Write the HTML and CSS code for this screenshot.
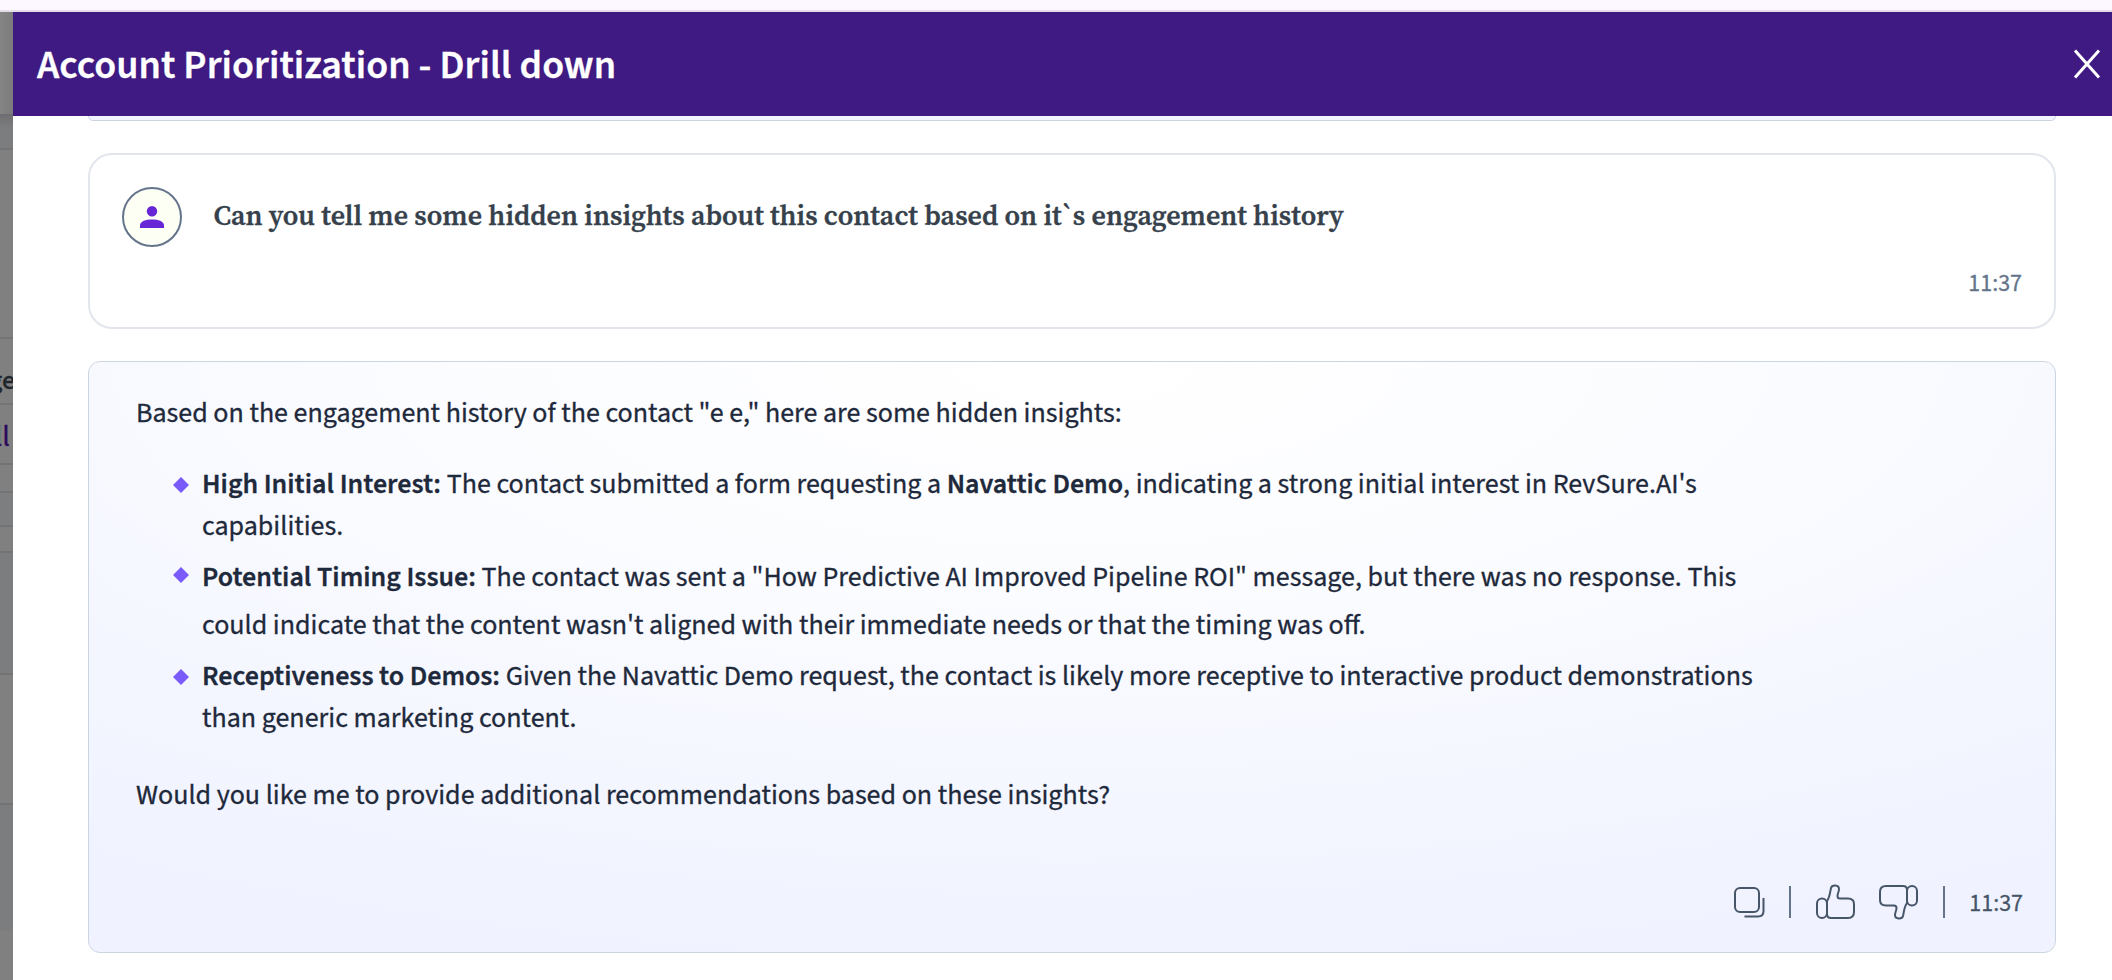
FILE: index.html
```html
<!DOCTYPE html>
<html lang="en">
<head>
<meta charset="utf-8">
<title>Account Prioritization - Drill down</title>
<link rel="stylesheet" href="styles.css">
</head>
<body>
<div class="topbar"></div>
<div class="shell">
  <aside class="backdrop">
    <div class="row r1"></div><div class="row r2"></div><div class="row r3"></div>
    <div class="row r4"><span class="peek">ge</span></div>
    <div class="row r5"><span class="peek link">ll</span></div>
    <div class="row r6"></div><div class="row r7"></div><div class="row r8"></div>
    <div class="row r9"></div><div class="row r10"></div><div class="row r11"></div>
  </aside>
  <main class="drawer">
    <header class="header">
      <h1 class="title">Account Prioritization - Drill down</h1>
      <svg class="close" viewBox="0 0 28 30"><path d="M2 1.500L26 28.500M26 1.500L2 28.500"/></svg>
    </header>
    <div class="thread">
      <div class="previous"></div>
      <section class="question">
        <div class="ask">
          <div class="avatar"><svg width="24" height="22" viewBox="0 0 24 22"><circle cx="12" cy="5.2" r="5.2"/><path d="M0 22v-2.5C0 15 6 13.4 12 13.4S24 15 24 19.500V22z"/></svg></div>
          <p class="prompt">Can you tell me some hidden insights about this contact based on it`s engagement history</p>
        </div>
        <time class="time">11:37</time>
      </section>
      <section class="answer">
        <p class="text">Based on the engagement history of the contact "e e," here are some hidden insights:</p>
        <ul class="list">
          <li class="item"><svg class="bullet" viewBox="0 0 16 16"><path d="M8 0l8 8-8 8-8-8z"/></svg><p class="text"><b>High Initial Interest:</b> The contact submitted a form requesting a <b>Navattic Demo</b>, indicating a strong initial interest in RevSure.AI's<br>capabilities.</p></li>
          <li class="item loose"><svg class="bullet" viewBox="0 0 16 16"><path d="M8 0l8 8-8 8-8-8z"/></svg><p class="text"><b>Potential Timing Issue:</b> The contact was sent a "How Predictive AI Improved Pipeline ROI" message, but there was no response. This<br>could indicate that the content wasn't aligned with their immediate needs or that the timing was off.</p></li>
          <li class="item"><svg class="bullet" viewBox="0 0 16 16"><path d="M8 0l8 8-8 8-8-8z"/></svg><p class="text"><b>Receptiveness to Demos:</b> Given the Navattic Demo request, the contact is likely more receptive to interactive product demonstrations<br>than generic marketing content.</p></li>
        </ul>
        <p class="text">Would you like me to provide additional recommendations based on these insights?</p>
        <footer class="actions">
          <svg class="icon copy" viewBox="0 0 32 32"><rect x="2" y="2" width="24" height="24" rx="5"/><path d="M11.500 30.500H25Q30.500 30.500 30.500 25V12"/></svg>
          <i class="rule"></i>
          <svg class="icon thumb up" viewBox="0 0 40 36"><rect x="2" y="14.500" width="10" height="19.500" rx="5"/><path d="M12 17C15 13 15 8 16 4C17 .5 24 .5 24 5C24 8 22.500 9 22.500 12Q22.500 14.500 25 14.500H33Q39 14.500 39 20V28Q39 34 33 34H16Q12 34 12 30z"/></svg>
          <svg class="icon thumb down" viewBox="0 0 40 36"><g transform="rotate(180 20 18)"><rect x="1" y="14.500" width="10" height="19.500" rx="5"/><path d="M11 17C14 13 14 8 15 4C16 .5 23 .5 23 5C23 8 21.500 9 21.500 12Q21.500 14.500 24 14.500H32Q38 14.500 38 20V28Q38 34 32 34H15Q11 34 11 30z"/></g></svg>
          <i class="rule"></i>
          <time class="time">11:37</time>
        </footer>
      </section>
    </div>
  </main>
</div>
</body>
</html>
```
FILE: styles.css
```css
* { box-sizing: border-box; }
body { margin: 0; width: 2112px; height: 980px; overflow: hidden; background: #fff; font-family: "Source Sans 3", "Source Sans Pro", "Noto Sans CJK SC", sans-serif; -webkit-text-stroke: 0.3px; }
p, h1, ul { margin: 0; padding: 0; }
b { font-weight: 600; }
.topbar { height: 12px; background: #fdf8ff; border-bottom: 2px solid #e5deea; }
.shell { display: flex; height: 968px; }
.backdrop { width: 13px; overflow: hidden; background: #808080; }
.row { border-bottom: 2px solid #737476; overflow: hidden; }
.r1 { height: 104px; background: linear-gradient(90deg, #858585, #7b7b7c); border-color: #6d6d74; }
.r2 { height: 34px; background: linear-gradient(#717173, #7c7d7f 12px); }
.r3 { height: 189px; }
.r4 { height: 66px; }
.r5 { height: 60px; }
.r6 { height: 28px; }
.r7 { height: 34px; background: #7c7e80; }
.r8 { height: 26px; }
.r9 { height: 122px; background: #7c7d7f; }
.r10 { height: 130px; }
.r11 { height: 126px; background: #7c7d7f; border: 0; }
.peek { display: flex; justify-content: flex-end; width: 15px; padding-top: 25px; font-size: 26px; font-weight: 500; line-height: 33px; color: #20262c; }
.link { width: 10px; padding-top: 12px; font-size: 30px; font-weight: 400; line-height: 39px; color: #2c0a5c; }
.drawer { flex: 1; background: #fff; }
.header { display: flex; align-items: center; justify-content: space-between; height: 104px; padding: 0 11px 0 24px; background: #3f1a82; }
.title { padding-top: 3px; font-size: 40px; line-height: 52px; font-weight: 600; color: #fff; }
.close { width: 28px; height: 30px; fill: none; stroke: #fff; stroke-width: 3; }
.thread { padding: 0 56px 0 75px; }
.previous { height: 5px; border: 1px solid #cbd5e1; border-top: 0; border-radius: 0 0 12px 12px; background: #f2f5ff; }
.question { display: flex; flex-direction: column; justify-content: space-between; height: 176px; margin-top: 32px; padding: 32px 32px 27px 32px; border: 2px solid #e2e5eb; border-radius: 24px; }
.ask { display: flex; gap: 31.5px; }
.avatar { display: flex; align-items: center; justify-content: center; width: 60px; height: 60px; border: 2px solid #64748b; border-radius: 50%; background: #fdfff5; fill: #6726d6; }
.prompt { font: 600 28px/56px "Source Serif 4", "Source Serif Pro", "Liberation Serif", serif; color: #36414c; }
.time { align-self: flex-end; font-size: 24px; line-height: 32px; color: #64748b; }
.answer { display: flex; flex-direction: column; height: 592px; margin-top: 32px; padding: 30px 32px 32px 47px; border: 1px solid #cbd5e1; border-radius: 12px; background: radial-gradient(ellipse 1700px 600px at 50% 0, #fff 0, #fbfcff 40%, #f4f6ff 75%, #f0f3ff 100%); }
.text { font-size: 28px; line-height: 42px; color: #1e293b; white-space: nowrap; }
.list { display: flex; flex-direction: column; gap: 6px; margin: 29px 0 35px; padding-left: 37px; list-style: none; }
.item { display: flex; gap: 13px; }
.bullet { width: 16px; height: 16px; margin-top: 14px; fill: #7a5af8; }
.loose .text { line-height: 48px; }
.actions { display: flex; align-items: center; justify-content: flex-end; margin-top: auto; }
.icon { fill: none; stroke: #475569; stroke-width: 2; }
.copy { width: 32px; height: 32px; margin-right: 24px; }
.rule { width: 2px; height: 32px; background: #64748b; }
.thumb { width: 40px; height: 36px; }
.up { margin: 0 23px 0 24px; }
.down { margin-right: 25px; }
.actions .time { margin-left: 24px; padding-top: 3px; align-self: center; color: #475569; }
```
